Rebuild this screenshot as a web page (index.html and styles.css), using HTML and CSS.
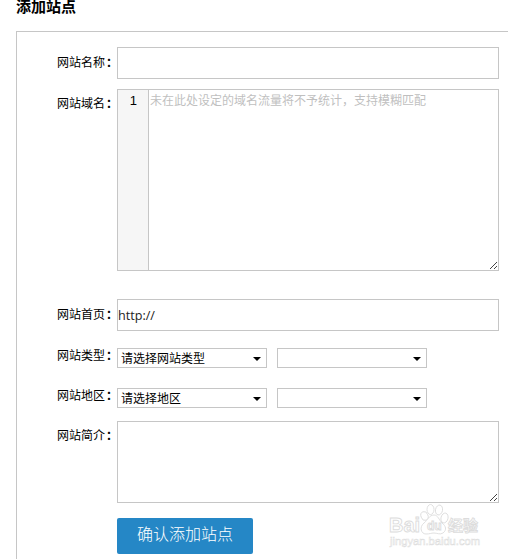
FILE: index.html
```html
<!DOCTYPE html>
<html lang="zh-CN">
  <head>
    <meta charset="UTF-8" />
    <meta name="viewport" content="width=device-width, initial-scale=1.0" />
    <title>添加站点</title>
    <link rel="stylesheet" href="styles.css">
  </head>

  <body>
    <h1>添加站点</h1>

    <form class="panel">
      <div class="row row-name">
        <label for="name">网站名称<span class="colon">：</span></label>
        <input type="text" id="name" class="field" />
      </div>

      <div class="row row-domain">
        <label for="domain">网站域名<span class="colon">：</span></label>
        <div class="field editor">
          <div class="gutter">1</div>
          <textarea id="domain" placeholder="未在此处设定的域名流量将不予统计，支持模糊匹配"></textarea>
          <svg class="grip" width="9" height="9" viewBox="0 0 9 9">
            <path d="M1 8 L8 1 M5 8 L8 5" />
          </svg>
        </div>
      </div>

      <div class="row row-home">
        <label for="home">网站首页<span class="colon">：</span></label>
        <input type="text" id="home" class="field" value="http://" />
      </div>

      <div class="row row-type">
        <label for="type">网站类型<span class="colon">：</span></label>
        <div class="select">
          <select id="type"><option>请选择网站类型</option></select>
        </div>
        <div class="select">
          <select><option></option></select>
        </div>
      </div>

      <div class="row row-area">
        <label for="area">网站地区<span class="colon">：</span></label>
        <div class="select">
          <select id="area"><option>请选择地区</option></select>
        </div>
        <div class="select">
          <select><option></option></select>
        </div>
      </div>

      <div class="row row-intro">
        <label for="intro">网站简介<span class="colon">：</span></label>
        <div class="field intro">
          <textarea id="intro"></textarea>
          <svg class="grip" width="9" height="9" viewBox="0 0 9 9">
            <path d="M1 8 L8 1 M5 8 L8 5" />
          </svg>
        </div>
      </div>

      <button type="button" class="submit">确认添加站点</button>
    </form>

    <svg class="watermark" width="100" height="50" viewBox="0 0 100 50">
      <g class="mark">
        <text x="2" y="30" class="brand" textLength="31" lengthAdjust="spacingAndGlyphs">Bai</text>
        <ellipse cx="37.500" cy="14" rx="3.500" ry="4.500" transform="rotate(-20 37.500 14)" />
        <ellipse cx="43.500" cy="7.500" rx="3.500" ry="5" />
        <ellipse cx="52" cy="8" rx="3.500" ry="5" transform="rotate(12 52 8)" />
        <ellipse cx="57.500" cy="16" rx="3.500" ry="5" transform="rotate(15 57.500 16)" />
        <path d="M47 13 C42 13 41 18 37 21 C32 25 34 32 39 32 C43 32 44 31 47 31 C50 31 53 33 56 31 C60 28 59 24 55 21 C52 18 51 13 47 13 Z" />
        <text x="40" y="28" class="du">du</text>
        <text x="61" y="29" class="cn">经验</text>
        <text x="3" y="43" class="url" textLength="90" lengthAdjust="spacingAndGlyphs">jingyan.baidu.com</text>
      </g>
    </svg>
  </body>
</html>
```
FILE: styles.css
```css
* {
  box-sizing: border-box;
}

body {
  margin: 0;
  height: 559px;
  overflow: hidden;
  background-color: #fff;
  color: #000;
  font: normal 12px "Liberation Sans", "Noto Sans CJK SC", sans-serif;
}

h1 {
  margin: 0 0 18px 16px;
  height: 13px;
  font-size: 15px;
  line-height: 13px;
}

.panel {
  margin-left: 16px;
  height: 528px;
  padding: 15px 0 0 40px;
  border: 1px solid #c6c6c6;
  border-right: none;
  border-bottom: none;
}

.row {
  display: flex;
  align-items: flex-start;
}

label {
  width: 60px;
  flex: none;
  line-height: 16px;
  white-space: nowrap;
}

.colon {
  padding-left: 1px;
  font-weight: bold;
}

.field {
  width: 382px;
  height: 32px;
  padding: 0;
  border: 1px solid #c6c6c6;
  background-color: #fff;
}

input.field {
  font: normal 12.6px "Open Sans", sans-serif;
  color: #222;
}

textarea {
  flex: 1;
  height: 100%;
  padding: 3px 1px 2px;
  border: none;
  resize: none;
  background: none;
  font: inherit;
  line-height: 17px;
}

textarea::placeholder {
  color: #bfbfbf;
}

.row-name {
  height: 42px;
}

.row-domain {
  height: 210px;
}

.row-home {
  height: 49px;
}

.row-type {
  height: 40px;
}

.row-area {
  height: 33px;
}

.row-intro {
  height: 97px;
}

.row-name label,
.row-home label {
  padding-top: 8px;
}

.row-domain label,
.row-intro label {
  padding-top: 7px;
}

.editor,
.intro {
  position: relative;
  display: flex;
}

.editor {
  height: 182px;
}

.intro {
  height: 82px;
}

.gutter {
  width: 31px;
  padding: 3px 11px 0 0;
  border-right: 1px solid #c6c6c6;
  background-color: #f6f6f6;
  font-size: 13px;
  line-height: 15px;
  text-align: right;
}

.grip {
  position: absolute;
  right: 0;
  bottom: 0;
  fill: none;
  stroke: #444;
  stroke-width: 1;
}

.select {
  position: relative;
  width: 150px;
  height: 20px;
  margin-right: 10px;
  border: 1px solid #c6c6c6;
}

.select select {
  display: block;
  width: 100%;
  height: 18px;
  padding: 1px 3px 0;
  border: none;
  appearance: none;
  background: none;
  color: #000;
  font: inherit;
}

.select::after {
  content: "";
  position: absolute;
  right: 5px;
  top: 8px;
  border: 4px solid transparent;
  border-top-color: #000;
  border-bottom: none;
}

.submit {
  display: block;
  width: 136px;
  height: 36px;
  margin-left: 60px;
  padding: 0 0 6px;
  border: none;
  border-radius: 2px;
  background-color: #2587c6;
  color: #fff;
  font: 300 16px "Noto Sans CJK SC", sans-serif;
}

.watermark {
  position: absolute;
  left: 387px;
  top: 502px;
}

.mark {
  fill: #fff;
  stroke: #dcdcdc;
  stroke-width: 0.9;
}

.brand {
  font: bold 20px "Liberation Sans", sans-serif;
}

.du {
  font: bold 12px "Liberation Sans", sans-serif;
}

.cn {
  font: bold 15px "Noto Sans CJK SC", sans-serif;
}

.url {
  font: normal 11px "Liberation Sans", sans-serif;
  stroke-width: 0.5;
}
```
